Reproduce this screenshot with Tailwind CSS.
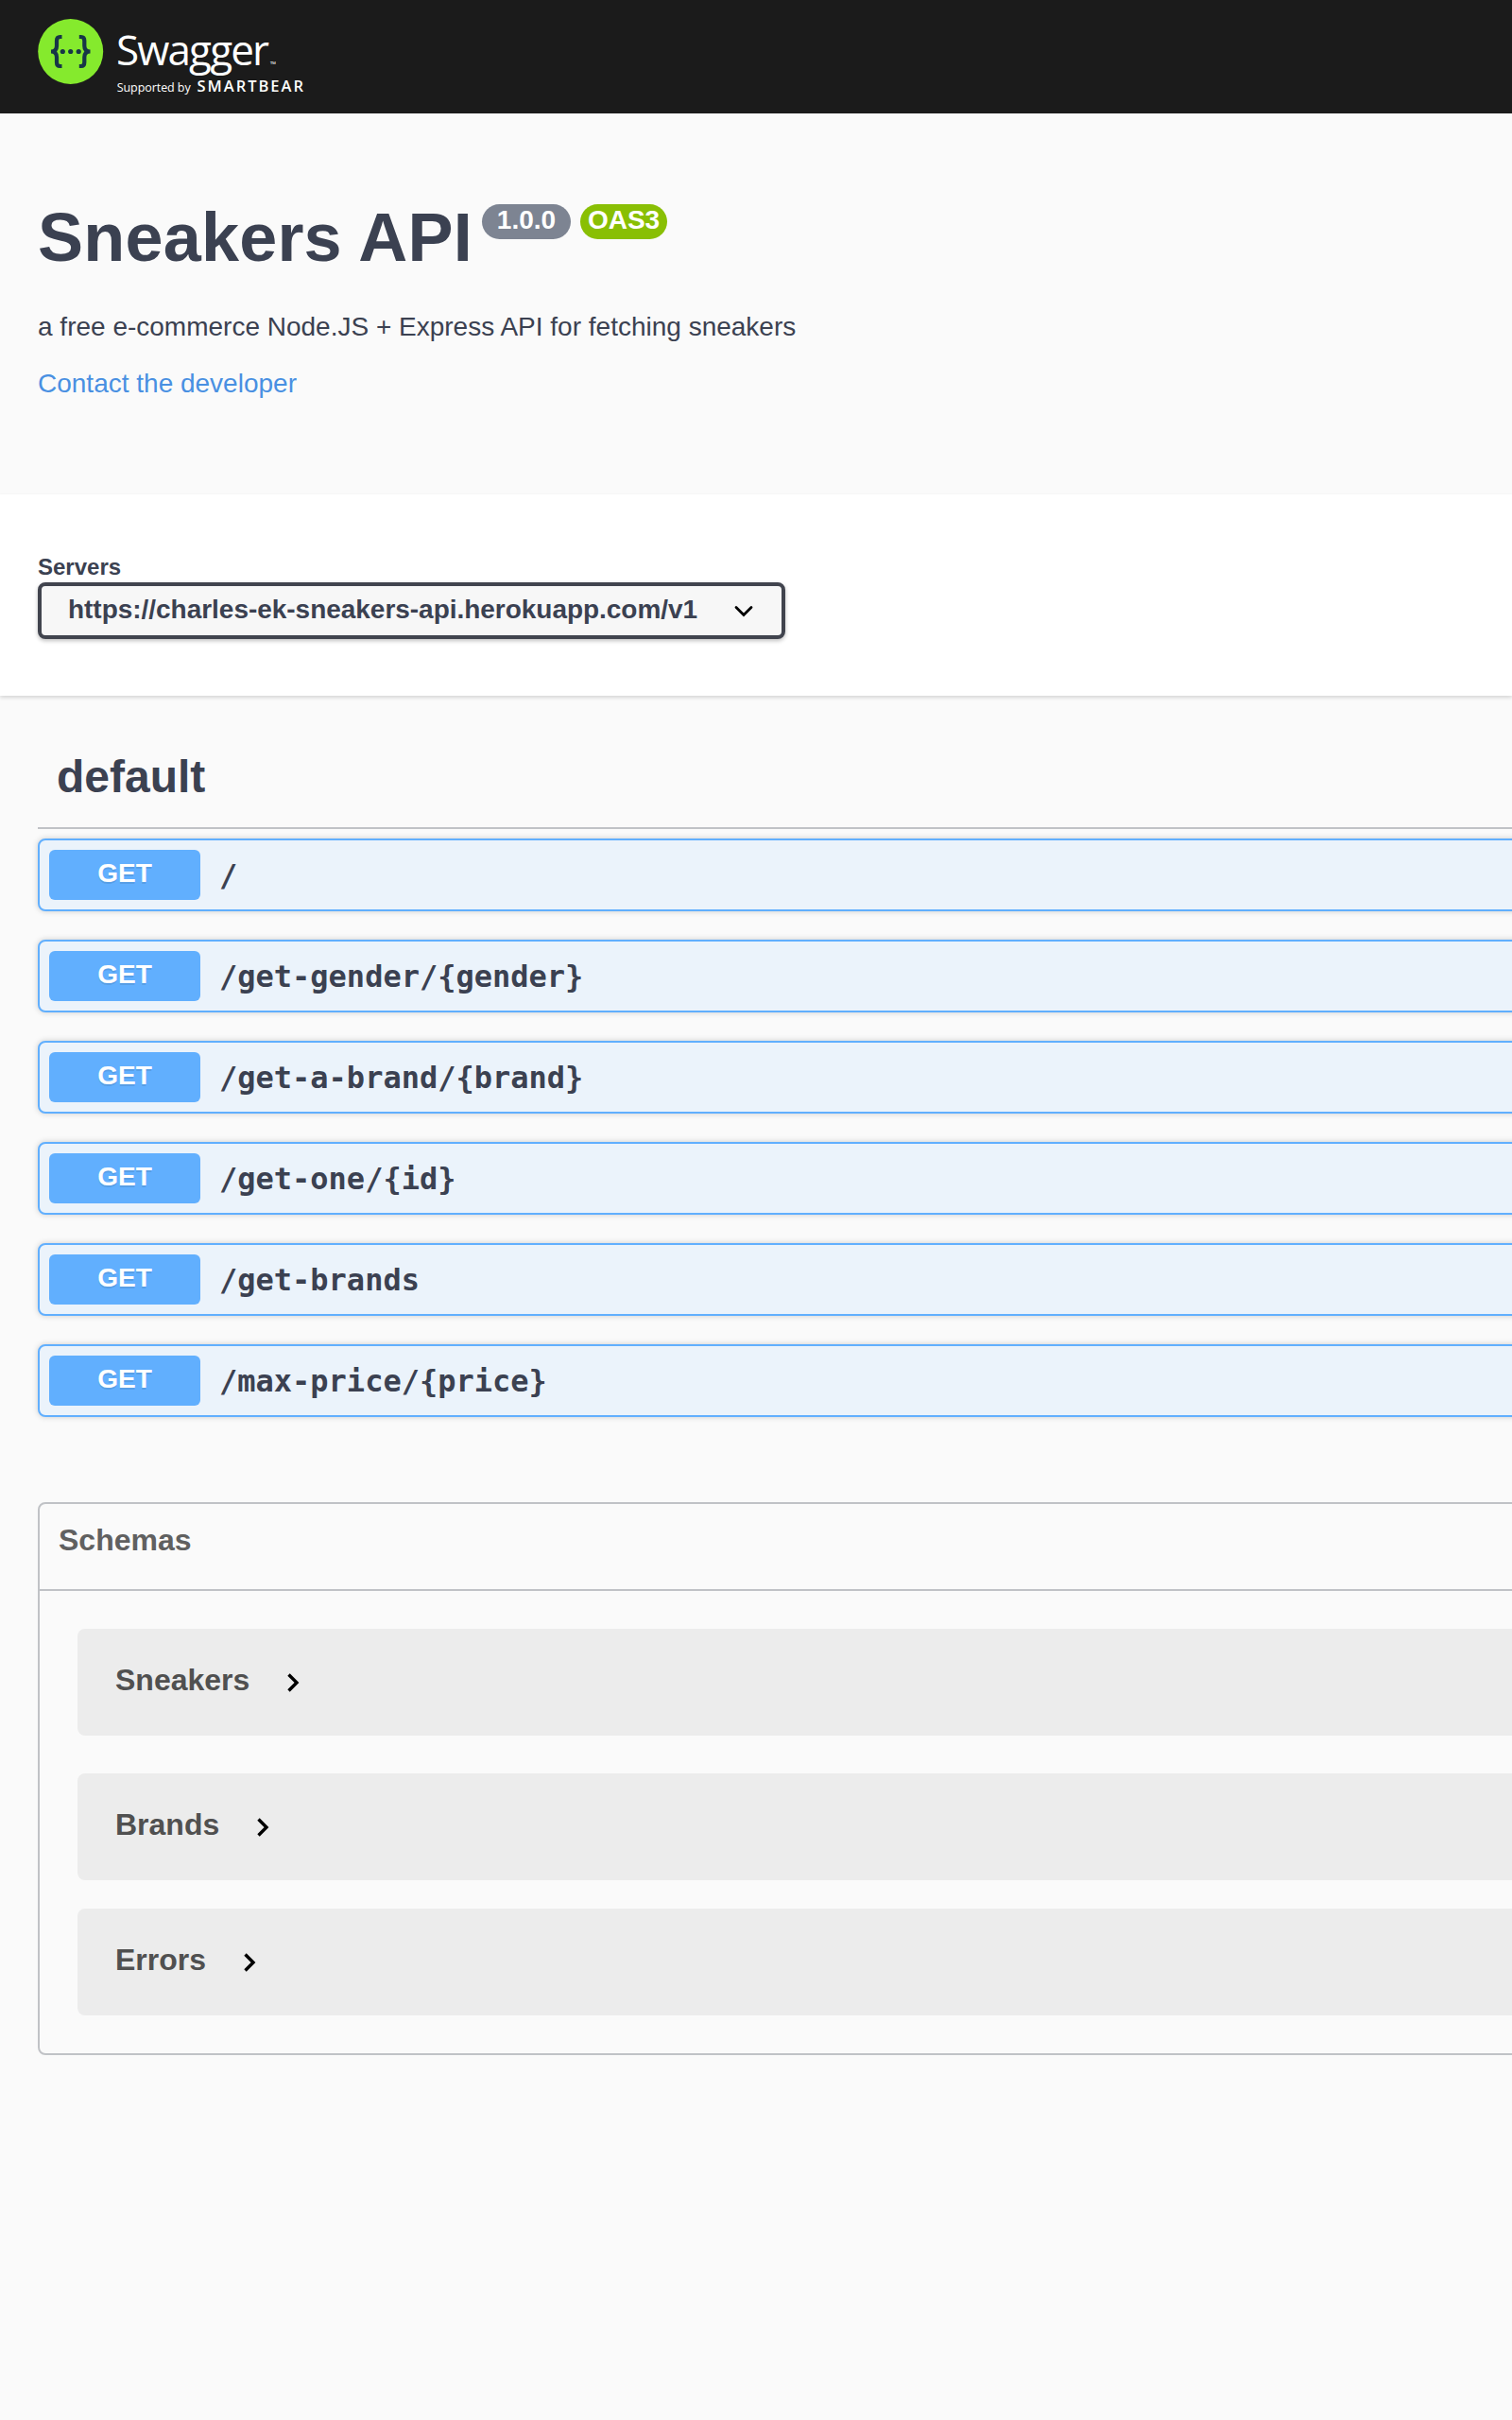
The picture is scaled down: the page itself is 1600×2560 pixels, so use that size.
<!DOCTYPE html>
<html lang="en">
<head>
<meta charset="utf-8">
<title>Sneakers API</title>
<script src="https://cdn.jsdelivr.net/npm/@tailwindcss/browser@4"></script>
</head>
<body class="min-h-[2560px] overflow-hidden bg-[#fafafa] font-['Liberation_Sans',sans-serif] text-[#3b4151]">
<header class="h-[120px] bg-[#1b1b1b] pl-10 pt-5">
  <svg width="290" height="84" viewBox="40 20 290 84" fill="#fff" font-family="'Open Sans'">
    <circle cx="74.7" cy="54.5" r="34.5" fill="#85ea2d"/>
    <g fill="none" stroke="#173647" stroke-width="4.2">
      <path d="M65.500 39H63.500Q60 39 60 43V48.500Q60 54.500 54 54.500Q60 54.500 60 60.500V66Q60 70 63.500 70H65.500"/>
      <path d="M83.800 39H85.800Q89.300 39 89.300 43V48.500Q89.300 54.500 95.500 54.500Q89.300 54.500 89.300 60.500V66Q89.300 70 85.800 70H83.800"/>
    </g>
    <g fill="#173647"><circle cx="66.300" cy="54.500" r="2.600"/><circle cx="74.700" cy="54.500" r="2.600"/><circle cx="83.200" cy="54.500" r="2.600"/></g>
    <text x="123" y="68.500" font-size="44" font-weight="400" textLength="162" lengthAdjust="spacing">Swagger</text>
    <text x="286" y="71" font-size="8">™</text>
    <text x="123.700" y="96.700" font-size="12.500" textLength="78">Supported by</text>
    <text x="208.500" y="96.700" font-size="16.500" font-weight="600" textLength="112.500">SMARTBEAR</text>
  </svg>
</header>
<section class="h-[403px] px-10 pt-[91px]">
  <div class="flex items-start">
    <h1 class="text-[72px] leading-[80px] font-bold tracking-[0.2px]">Sneakers API</h1>
    <span class="mt-[5px] ml-[10px] h-[37px] w-[94px] rounded-full bg-[#7d8492] text-center text-[28px] leading-[33px] font-bold text-white">1.0.0</span>
    <span class="mt-[5px] ml-[10px] h-[37px] w-[92px] rounded-full bg-[#89bf04] text-center text-[28px] leading-[33px] font-bold text-white">OAS3</span>
  </div>
  <p class="mt-[39px] text-[28px] leading-8">a free e-commerce Node.JS + Express API for fetching sneakers</p>
  <a class="mt-7 block text-[28px] leading-8 text-[#4990e2]">Contact the developer</a>
</section>
<section class="h-[213px] bg-white px-10 pt-[63px] shadow-[0_2px_4px_rgba(0,0,0,0.15)]">
  <label class="block text-2xl leading-7 font-bold">Servers</label>
  <div class="mt-0.5 flex h-[60px] w-[791px] items-start justify-between rounded-lg border-4 border-[#41444e] bg-[#f7f7f7] pt-[9px] pr-[29px] pl-7 shadow-[0_2px_4px_rgba(0,0,0,0.25)]">
    <span class="text-[28px] leading-8 font-bold tracking-[-0.03px]">https://charles-ek-sneakers-api.herokuapp.com/v1</span>
    <svg class="mt-[11px]" width="22" height="14" viewBox="0 0 22 14" fill="none" stroke="#000" stroke-width="2.800" stroke-linecap="round"><path d="M3 2.500L11 10.500L19 2.500"/></svg>
  </div>
</section>
<main class="-mr-20 pl-10">
  <h2 class="border-b-2 border-[#3b4151]/30 pt-[58px] pb-[25px] pl-5 text-5xl leading-[56px] font-bold">default</h2>
  <div id="ops" class="mt-[10px] flex flex-col gap-[30px]"></div>
  <section class="mt-[90px] rounded-lg border-2 border-[#3b4151]/30">
    <h3 class="h-[92px] border-b-2 border-[#3b4151]/30 pt-5 pl-5 text-[32px] leading-9 font-bold text-[#606060]">Schemas</h3>
    <div id="models" class="px-10 pt-10 pb-10"></div>
  </section>
</main>
<script>
document.getElementById('ops').innerHTML = ['/', '/get-gender/{gender}', '/get-a-brand/{brand}', '/get-one/{id}', '/get-brands', '/max-price/{price}'].map(p => `
  <div class="flex h-[77px] items-start rounded-lg border-2 border-[#61affe] bg-[#ebf3fb] pl-[10px] shadow-[0_0_6px_rgba(0,0,0,0.19)]">
    <span class="mt-[10px] h-[53px] w-40 rounded-md bg-[#61affe] pt-[9px] text-center text-[28px] leading-8 font-bold text-white [text-shadow:0_2px_0_rgba(0,0,0,0.1)]">GET</span>
    <span class="mt-[18px] ml-5 font-['DejaVu_Sans_Mono',monospace] text-[32px] leading-[38px] font-bold">${p}</span>
  </div>`).join('');
document.getElementById('models').innerHTML = [['Sneakers', 'mb-10'], ['Brands', 'mb-[30px]'], ['Errors', '']].map(([n, m]) => `
  <div class="${m} flex h-[113px] items-start rounded-lg bg-[#ececec] pt-9 pl-10">
    <span class="text-[32px] leading-9 font-bold text-[#505050]">${n}</span>
    <svg class="mt-[10px] ml-[38px]" width="16" height="22" viewBox="0 0 16 22" fill="none" stroke="#000" stroke-width="3.400"><path d="M3.500 2.500L12 11L3.500 19.500"/></svg>
  </div>`).join('');
</script>
</body>
</html>
